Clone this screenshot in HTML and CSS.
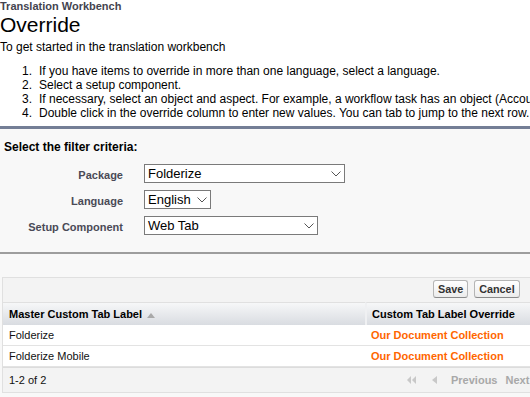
FILE: index.html
```html
<!DOCTYPE html>
<html lang="en">
<head>
<meta charset="utf-8">
<title>Override - Translation Workbench</title>
<link rel="stylesheet" href="styles.css">
</head>
<body>
<header class="page-head">
  <div class="crumb">Translation Workbench</div>
  <h1 class="title">Override</h1>
</header>
<p class="intro">To get started in the translation workbench</p>
<ol class="steps">
  <li><span class="num">1.</span><span>If you have items to override in more than one language, select a language.</span></li>
  <li><span class="num">2.</span><span>Select a setup component.</span></li>
  <li><span class="num">3.</span><span>If necessary, select an object and aspect. For example, a workflow task has an object (Account) and aspect (Subject).</span></li>
  <li><span class="num">4.</span><span>Double click in the override column to enter new values. You can tab to jump to the next row.</span></li>
</ol>
<main class="main">
  <section class="filter">
    <div class="filter-title">Select the filter criteria:</div>
    <div class="filter-grid">
      <span class="flabel">Package</span>
      <div class="sel w-pkg"><span>Folderize</span><svg class="chev" width="10" height="6" viewBox="0 0 10 6"><polyline points="0.5,0.5 5,5 9.5,0.5" fill="none" stroke="#555" stroke-width="1"/></svg></div>
      <span class="flabel">Language</span>
      <div class="sel w-lang"><span>English</span><svg class="chev" width="10" height="6" viewBox="0 0 10 6"><polyline points="0.5,0.5 5,5 9.5,0.5" fill="none" stroke="#555" stroke-width="1"/></svg></div>
      <span class="flabel">Setup Component</span>
      <div class="sel w-comp"><span>Web Tab</span><svg class="chev" width="10" height="6" viewBox="0 0 10 6"><polyline points="0.5,0.5 5,5 9.5,0.5" fill="none" stroke="#555" stroke-width="1"/></svg></div>
    </div>
  </section>
  <section class="results">
    <div class="box">
      <div class="toolbar">
        <button class="btn" type="button">Save</button>
        <button class="btn" type="button">Cancel</button>
      </div>
      <div class="tbl">
        <div class="th c1">Master Custom Tab Label<svg class="sort" width="8" height="5" viewBox="0 0 8 5"><polygon points="0,5 8,5 4,0" fill="#a9a9a9"/></svg></div>
        <div class="th c2">Custom Tab Label Override</div>
        <div class="td c1">Folderize</div>
        <div class="td c2 ov">Our Document Collection</div>
        <div class="td c1">Folderize Mobile</div>
        <div class="td c2 ov">Our Document Collection</div>
      </div>
      <div class="footer">
        <span class="count">1-2 of 2</span>
        <div class="pager">
          <svg class="first" width="9" height="8" viewBox="0 0 9 8"><polygon points="4,0 4,8 0,4" fill="#c8c8c8"/><polygon points="9,0 9,8 5,4" fill="#c8c8c8"/></svg>
          <svg class="prev-ico" width="5" height="8" viewBox="0 0 5 8"><polygon points="5,0 5,8 0,4" fill="#c8c8c8"/></svg>
          <span class="plink prev">Previous</span>
          <span class="plink">Next</span>
          <svg class="next-ico" width="5" height="8" viewBox="0 0 5 8"><polygon points="0,0 0,8 5,4" fill="#c8c8c8"/></svg>
        </div>
      </div>
    </div>
  </section>
</main>
</body>
</html>
```
FILE: styles.css
```css
html {
  overflow: hidden;
}
body {
  margin: 0;
  font-family: "Liberation Sans", Arial, sans-serif;
  color: #000;
  background: #fff;
}
.crumb {
  font-size: 11px;
  font-weight: bold;
  line-height: 12px;
  color: #44444f;
}
.title {
  margin: 1px 0 0;
  font-size: 21px;
  font-weight: normal;
  line-height: 24px;
}
.intro {
  margin: 3px 0 0;
  font-size: 12px;
  line-height: 14px;
}
.steps {
  margin: 10px 0 0;
  padding: 0 0 0 22px;
  list-style: none;
  font-size: 12px;
  line-height: 14px;
  white-space: nowrap;
}
.steps li {
  display: flex;
}
.num {
  flex: none;
  width: 17px;
}
.main {
  margin-top: 6px;
  background: #f8f8f8;
  min-height: 271px;
}
.filter {
  border-top: 3px solid #747e96;
  border-bottom: 2px solid #9d9d9d;
  padding: 11px 0 17px 4px;
}
.filter-title {
  font-size: 12px;
  font-weight: bold;
  line-height: 14px;
}
.filter-grid {
  margin-top: 10px;
  display: grid;
  grid-template-columns: 119px auto;
  column-gap: 21px;
  row-gap: 7px;
  justify-items: start;
  align-items: center;
}
.flabel {
  justify-self: end;
  padding-top: 3px;
  font-size: 11px;
  font-weight: bold;
  color: #4a4a56;
  white-space: nowrap;
}
.sel {
  box-sizing: border-box;
  height: 19px;
  border: 1px solid #7a7a7a;
  background: #fff;
  display: flex;
  align-items: center;
  justify-content: space-between;
  padding: 0 3px 0 3px;
  font-size: 13px;
  line-height: 15px;
}
.sel span {
  margin-top: -1px;
}
.chev {
  flex: none;
}
.w-pkg {
  width: 201px;
}
.w-lang {
  width: 67px;
}
.w-comp {
  width: 174px;
}
.results {
  padding: 23px 0 0 2px;
}
.box {
  width: 640px;
  border: 1px solid #e0e0e0;
  background: #f3f3f3;
}
.toolbar {
  box-sizing: border-box;
  height: 24px;
  display: flex;
  gap: 6px;
  padding: 2px 0 0 430px;
}
.btn {
  box-sizing: border-box;
  height: 18px;
  margin: 0;
  padding: 0 4px;
  border: 1px solid #b5b5b5;
  border-bottom-color: #8a8a8a;
  border-radius: 3px;
  background: linear-gradient(#ffffff, #ececec);
  font-family: "Liberation Sans", Arial, sans-serif;
  font-size: 10.8px;
  font-weight: bold;
  color: #333;
  line-height: 16px;
}
.tbl {
  display: grid;
  grid-template-columns: 362px 1fr;
  font-size: 11px;
}
.th {
  box-sizing: border-box;
  height: 23px;
  border-top: 1px solid #e0e0e0;
  background: linear-gradient(#f6f7f8, #d9dce1);
  font-weight: bold;
  display: flex;
  align-items: center;
  padding-left: 6px;
  white-space: nowrap;
}
.th.c2 {
  border-left: 2px solid #eff0f2;
  padding-left: 5px;
}
.sort {
  margin-left: 5px;
  margin-top: 2px;
}
.td {
  box-sizing: border-box;
  height: 21px;
  border-bottom: 1px solid #e3e3e3;
  background: #fff;
  display: flex;
  align-items: center;
  padding-left: 6px;
  white-space: nowrap;
  color: #111;
}
.td.ov {
  color: #ff6600;
  font-weight: bold;
}
.footer {
  box-sizing: border-box;
  height: 25px;
  border-top: 1px solid #dcdcdc;
  display: flex;
  align-items: center;
  padding-left: 6px;
  font-size: 11px;
}
.count {
  flex: none;
  width: 398px;
  color: #111;
}
.pager {
  display: flex;
  align-items: center;
  white-space: nowrap;
}
.prev-ico {
  margin-left: 16px;
}
.plink {
  font-weight: bold;
  color: #a8a8a8;
}
.prev {
  margin-left: 14px;
  margin-right: 8px;
}
.next-ico {
  margin-left: 6px;
}
```
